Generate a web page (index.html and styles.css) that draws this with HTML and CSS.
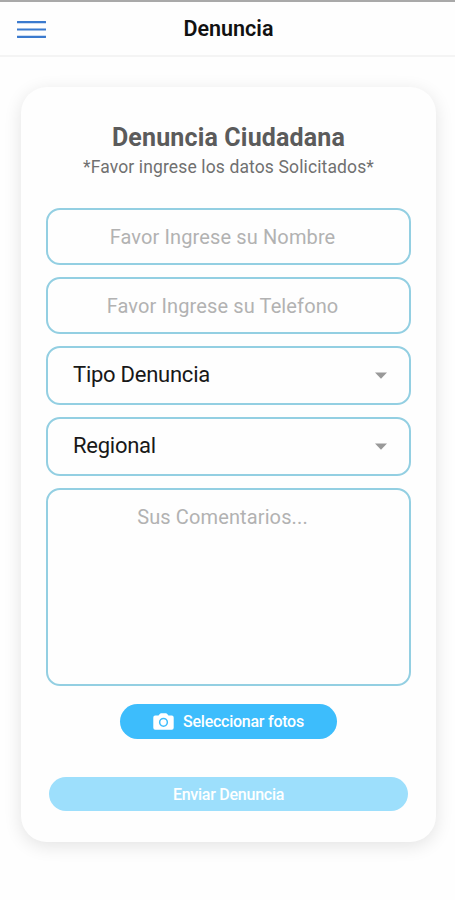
FILE: index.html
```html
<!DOCTYPE html>
<html lang="es">
<head>
<meta charset="utf-8">
<meta name="viewport" content="width=device-width, initial-scale=1">
<title>Denuncia</title>
<link rel="stylesheet" href="styles.css">
</head>
<body>
<header class="topbar">
  <button class="menu" type="button" aria-label="Menú"><svg class="menu-icon" viewBox="0 0 29 19"><path d="M.5 2.200h28M.5 9.500h28M.5 16.800h28"/></svg></button>
  <h1 class="topbar-title">Denuncia</h1>
</header>
<main class="card">
  <h2 class="title">Denuncia Ciudadana</h2>
  <p class="subtitle">*Favor ingrese los datos Solicitados*</p>
  <form class="form">
    <input class="field" type="text" placeholder="Favor Ingrese su Nombre">
    <input class="field" type="tel" placeholder="Favor Ingrese su Telefono">
    <div class="field select"><span>Tipo Denuncia</span><svg class="caret" viewBox="0 0 12 7"><path d="M0 .5h12L6 6.7z"/></svg></div>
    <div class="field select"><span>Regional</span><svg class="caret" viewBox="0 0 12 7"><path d="M0 .5h12L6 6.7z"/></svg></div>
    <textarea class="field comments" placeholder="Sus Comentarios..."></textarea>
    <button class="photos" type="button">
      <svg class="camera" viewBox="0 0 21 17"><path fill-rule="evenodd" d="M2.2 2.5h3.300L6.800.9Q7.300.3 8.100.3h4.800q.8 0 1.300.6l1.300 1.600h3.300q1.900 0 1.900 1.900v10.400q0 1.900-1.900 1.900H2.200Q.3 16.700.3 14.800V4.400q0-1.900 1.900-1.900zM10.500 4.700a4.600 4.600 0 1 0 0 9.200a4.600 4.600 0 1 0 0-9.200zm0 1.500a3.100 3.100 0 1 1 0 6.200a3.100 3.100 0 1 1 0-6.200z"/></svg>
      <span>Seleccionar fotos</span>
    </button>
    <button class="submit" type="button">Enviar Denuncia</button>
  </form>
</main>
</body>
</html>
```
FILE: styles.css
```css
* { box-sizing: border-box; }
body {
  margin: 0;
  min-height: 900px;
  background: #fefefe;
  font-family: Roboto, "Liberation Sans", sans-serif;
}
.topbar {
  display: grid;
  grid-template-columns: 46px 1fr 46px;
  align-items: center;
  height: 57px;
  border-top: 2px solid #a9a9a9;
  border-bottom: 2px solid #f4f4f4;
}
.menu {
  width: 29px;
  height: 19px;
  margin: 1px 0 0 17px;
  padding: 0;
  border: 0;
  background: none;
}
.menu-icon { display: block; width: 29px; height: 19px; fill: none; stroke: #3b7ace; stroke-width: 2.2; stroke-linecap: round; }
.topbar-title {
  margin: 1px 0 0 2px;
  text-align: center;
  font-size: 21.5px;
  line-height: 26px;
  font-weight: 600;
  color: #111;
}
.card {
  width: 415px;
  height: 755px;
  margin: 30px 0 0 21px;
  padding: 36px 25px 0;
  border-radius: 26px;
  background: #fefefe;
  box-shadow: 0 4px 18px rgba(0, 0, 0, .11);
}
.title {
  margin: 0;
  text-align: center;
  font-size: 25px;
  line-height: 30px;
  font-weight: 700;
  letter-spacing: .16px;
  color: #5b5b5b;
}
.subtitle {
  margin: 3px 0 0;
  text-align: center;
  font-size: 17.5px;
  line-height: 22px;
  letter-spacing: .13px;
  color: #707070;
}
.form { display: flex; flex-direction: column; gap: 12.5px; margin-top: 30px; }
.field {
  width: 365px;
  height: 56.5px;
  border: 2px solid #93cfe2;
  border-radius: 14px;
  background: transparent;
  font: 20px/24px Roboto, "Liberation Sans", sans-serif;
}
input.field, .comments { margin: 0; padding: 1px 12px 0 0; text-align: center; letter-spacing: .12px; outline: 0; }
.field::placeholder { color: #b2b2b2; opacity: 1; }
.select {
  display: flex;
  align-items: center;
  justify-content: space-between;
  height: 58.5px;
  padding: 0 22px 1px 25px;
  font-size: 22px;
  letter-spacing: -.25px;
  color: #181818;
}
.caret { width: 12px; height: 7px; margin-top: 2px; fill: #999; }
.comments { height: 198px; padding-top: 15px; resize: none; }
.photos {
  display: flex;
  align-items: center;
  justify-content: center;
  gap: 9px;
  width: 217px;
  height: 35px;
  margin: 5px 0 0 74px;
  padding: 1px 0 0;
  border: 0;
  border-radius: 18px;
  background: #3dbdfc;
  color: #fff;
  font: 500 16px/20px Roboto, "Liberation Sans", sans-serif;
  letter-spacing: -.25px;
}
.camera { width: 21px; height: 17px; fill: #fff; }
.submit {
  width: 359px;
  height: 34px;
  margin: 26px 0 0 3px;
  padding: 1px 0 0;
  border: 0;
  border-radius: 17px;
  background: #9ddffc;
  color: #fff;
  font: 500 16px/20px Roboto, "Liberation Sans", sans-serif;
  letter-spacing: -.25px;
}
```
